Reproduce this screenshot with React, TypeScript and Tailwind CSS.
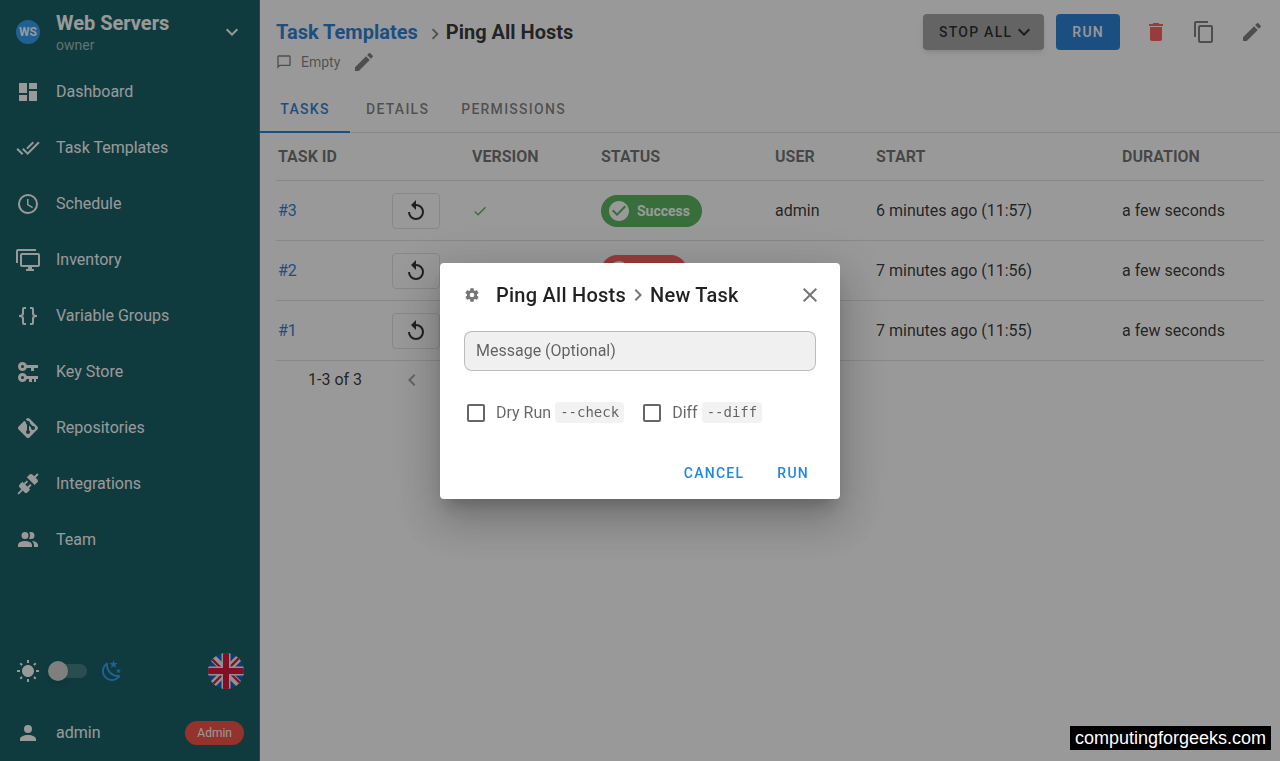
import { useState } from 'react'

const icons = {
  dashboard: 'M13,3V9H21V3M13,21H21V11H13M3,21H11V15H3M3,13H11V3H3V13Z',
  checkAll: 'M0.41,13.41L6,19L7.41,17.58L1.83,12M22.24,5.58L11.66,16.17L7.5,12L6.07,13.41L11.66,19L23.66,7M18,7L16.59,5.58L10.24,11.93L11.66,13.34L18,7Z',
  clock: 'M12,20A8,8 0 0,0 20,12A8,8 0 0,0 12,4A8,8 0 0,0 4,12A8,8 0 0,0 12,20M12,2A10,10 0 0,1 22,12A10,10 0 0,1 12,22C6.47,22 2,17.5 2,12A10,10 0 0,1 12,2M12.5,7V12.25L17,14.92L16.25,16.15L11,13V7H12.5Z',
  monitors: 'M22,17V7H6V17H22M22,5A2,2 0 0,1 24,7V17C24,18.11 23.1,19 22,19H16V21H18V23H10V21H12V19H6C4.89,19 4,18.11 4,17V7A2,2 0 0,1 6,5H22M2,3V15H0V3A2,2 0 0,1 2,1H20V3H2Z',
  braces: 'M8,3A2,2 0 0,0 6,5V9A2,2 0 0,1 4,11H3V13H4A2,2 0 0,1 6,15V19A2,2 0 0,0 8,21H10V19H8V14A2,2 0 0,0 6,12A2,2 0 0,0 8,10V5H10V3M16,3A2,2 0 0,1 18,5V9A2,2 0 0,0 20,11H21V13H20A2,2 0 0,0 18,15V19A2,2 0 0,1 16,21H14V19H16V14A2,2 0 0,1 18,12A2,2 0 0,1 16,10V5H14V3H16Z',
  keys: 'M6.5,2C8.46,2 10.13,3.25 10.74,5H22V8H18V11H15V8H10.74C10.13,9.75 8.46,11 6.5,11C4,11 2,9 2,6.5C2,4 4,2 6.5,2M6.5,5A1.5,1.5 0 0,0 5,6.5A1.5,1.5 0 0,0 6.5,8A1.5,1.5 0 0,0 8,6.5A1.5,1.5 0 0,0 6.5,5M6.5,13C8.46,13 10.13,14.25 10.74,16H22V19H20V22H18V19H16V22H13V19H10.74C10.13,20.75 8.46,22 6.5,22C4,22 2,20 2,17.5C2,15 4,13 6.5,13M6.5,16A1.5,1.5 0 0,0 5,17.5A1.5,1.5 0 0,0 6.5,19A1.5,1.5 0 0,0 8,17.5A1.5,1.5 0 0,0 6.5,16Z',
  git: 'M2.6,10.59L8.38,4.8L10.07,6.5C9.83,7.35 10.22,8.28 11,8.73V14.27C10.4,14.61 10,15.26 10,16A2,2 0 0,0 12,18A2,2 0 0,0 14,16C14,15.26 13.6,14.61 13,14.27V9.41L15.07,11.5C15,11.65 15,11.82 15,12A2,2 0 0,0 17,14A2,2 0 0,0 19,12A2,2 0 0,0 17,10C16.82,10 16.65,10 16.5,10.07L13.93,7.5C14.19,6.57 13.71,5.55 12.78,5.16C12.35,5 11.9,4.96 11.5,5.07L9.8,3.38L10.59,2.6C11.37,1.81 12.63,1.81 13.41,2.6L21.4,10.59C22.19,11.37 22.19,12.63 21.4,13.41L13.41,21.4C12.63,22.19 11.37,22.19 10.59,21.4L2.6,13.41C1.81,12.63 1.81,11.37 2.6,10.59Z',
  connection: 'M21.4 7.5C22.2 8.3 22.2 9.6 21.4 10.3L18.6 13.1L10.8 5.3L13.6 2.5C14.4 1.7 15.7 1.7 16.4 2.5L18.2 4.3L21.2 1.3L22.6 2.7L19.6 5.7L21.4 7.5M15.6 13.3L14.2 11.9L11.4 14.7L9.3 12.6L12.1 9.8L10.7 8.4L7.9 11.2L6.4 9.8L3.6 12.6C2.8 13.4 2.8 14.7 3.6 15.4L5.4 17.2L1.4 21.2L2.8 22.6L6.8 18.6L8.6 20.4C9.4 21.2 10.7 21.2 11.4 20.4L14.2 17.6L12.8 16.2L15.6 13.3Z',
  team: 'M16 17V19H2V17S2 13 9 13 16 17 16 17M12.5 7.5A3.5 3.5 0 1 0 9 11A3.5 3.5 0 0 0 12.5 7.5M15.94 13A5.32 5.32 0 0 1 18 17V19H22V17S22 13.37 15.94 13M15 4A3.39 3.39 0 0 0 13.07 4.59A5 5 0 0 1 13.07 10.41A3.39 3.39 0 0 0 15 11A3.5 3.5 0 0 0 15 4Z',
  account: 'M12,4A4,4 0 0,1 16,8A4,4 0 0,1 12,12A4,4 0 0,1 8,8A4,4 0 0,1 12,4M12,14C16.42,14 20,15.79 20,18V20H4V18C4,15.79 7.58,14 12,14Z',
  chevronDown: 'M7.41,8.58L12,13.17L16.59,8.58L18,10L12,16L6,10L7.41,8.58Z',
  chevronRight: 'M8.59,16.58L13.17,12L8.59,7.41L10,6L16,12L10,18L8.59,16.58Z',
  chevronLeft: 'M15.41,16.58L10.83,12L15.41,7.41L14,6L8,12L14,18L15.41,16.58Z',
  pencil: 'M20.71,7.04C21.1,6.65 21.1,6 20.71,5.63L18.37,3.29C18,2.9 17.35,2.9 16.96,3.29L15.12,5.12L18.87,8.87M3,17.25V21H6.75L17.81,9.93L14.06,6.18L3,17.25Z',
  trash: 'M19,4H15.5L14.5,3H9.5L8.5,4H5V6H19M6,19A2,2 0 0,0 8,21H16A2,2 0 0,0 18,19V7H6V19Z',
  copy: 'M19,21H8V7H19M19,5H8A2,2 0 0,0 6,7V21A2,2 0 0,0 8,23H19A2,2 0 0,0 21,21V7A2,2 0 0,0 19,5M16,1H4A2,2 0 0,0 2,3V17H4V3H16V1Z',
  replay: 'M12,5V1L7,6L12,11V7A6,6 0 0,1 18,13A6,6 0 0,1 12,19A6,6 0 0,1 6,13H4A8,8 0 0,0 12,21A8,8 0 0,0 20,13A8,8 0 0,0 12,5Z',
  check: 'M21,7L9,19L3.5,13.5L4.91,12.09L9,16.17L19.59,5.59L21,7Z',
  checkCircle: 'M12 2C6.5 2 2 6.5 2 12S6.5 22 12 22 22 17.5 22 12 17.5 2 12 2M10 17L5 12L6.41 10.59L10 14.17L17.59 6.58L19 8L10 17Z',
  alertCircle: 'M13,13H11V7H13M13,17H11V15H13M12,2A10,10 0 0,0 2,12A10,10 0 0,0 12,22A10,10 0 0,0 22,12A10,10 0 0,0 12,2Z',
  close: 'M19,6.41L17.59,5L12,10.59L6.41,5L5,6.41L10.59,12L5,17.59L6.41,19L12,13.41L17.59,19L19,17.59L13.41,12L19,6.41Z',
  message: 'M20 2H4C2.9 2 2 2.9 2 4V22L6 18H20C21.1 18 22 17.1 22 16V4C22 2.9 21.1 2 20 2M20 16H5.2L4 17.2V4H20V16Z',
  cog: 'M12,15.5A3.5,3.5 0 0,1 8.5,12A3.5,3.5 0 0,1 12,8.5A3.5,3.5 0 0,1 15.5,12A3.5,3.5 0 0,1 12,15.5M19.43,12.97C19.47,12.65 19.5,12.33 19.5,12C19.5,11.67 19.47,11.34 19.43,11L21.54,9.37C21.73,9.22 21.78,8.95 21.66,8.73L19.66,5.27C19.54,5.05 19.27,4.96 19.05,5.05L16.56,6.05C16.04,5.66 15.5,5.32 14.87,5.07L14.5,2.42C14.46,2.18 14.25,2 14,2H10C9.75,2 9.54,2.18 9.5,2.42L9.13,5.07C8.5,5.32 7.96,5.66 7.44,6.05L4.95,5.05C4.73,4.96 4.46,5.05 4.34,5.27L2.34,8.73C2.21,8.95 2.27,9.22 2.46,9.37L4.57,11C4.53,11.34 4.5,11.67 4.5,12C4.5,12.33 4.53,12.65 4.57,12.97L2.46,14.63C2.27,14.78 2.21,15.05 2.34,15.27L4.34,18.73C4.46,18.95 4.73,19.03 4.95,18.95L7.44,17.94C7.96,18.34 8.5,18.68 9.13,18.93L9.5,21.58C9.54,21.82 9.75,22 10,22H14C14.25,22 14.46,21.82 14.5,21.58L14.87,18.93C15.5,18.67 16.04,18.34 16.56,17.94L19.05,18.95C19.27,19.03 19.54,18.95 19.66,18.73L21.66,15.27C21.78,15.05 21.73,14.78 21.54,14.63L19.43,12.97Z',
  sun: 'M3.55 19.09L4.96 20.5L6.76 18.71L5.34 17.29M12 6C8.69 6 6 8.69 6 12S8.69 18 12 18 18 15.31 18 12C18 8.68 15.31 6 12 6M20 13H23V11H20M17.24 18.71L19.04 20.5L20.45 19.09L18.66 17.29M20.45 5L19.04 3.6L17.24 5.39L18.66 6.81M13 1H11V4H13M6.76 5.39L4.96 3.6L3.55 5L5.34 6.81L6.76 5.39M1 13H4V11H1M13 20H11V23H13',
  night: 'M17.75,4.09L15.22,6.03L16.13,9.09L13.5,7.28L10.87,9.09L11.78,6.03L9.25,4.09L12.44,4L13.5,1L14.56,4L17.75,4.09M21.25,11L19.61,12.25L20.2,14.23L18.5,13.06L16.8,14.23L17.39,12.25L15.75,11L17.81,10.95L18.5,9L19.19,10.95L21.25,11M18.97,15.95C19.8,15.87 20.69,17.05 20.16,17.8C19.84,18.25 19.5,18.67 19.08,19.07C15.17,23 8.84,23 4.94,19.07C1.03,15.17 1.03,8.83 4.94,4.93C5.34,4.53 5.76,4.17 6.21,3.85C6.96,3.32 8.14,4.21 8.06,5.04C7.79,7.9 8.75,10.87 10.95,13.06C13.14,15.26 16.1,16.22 18.97,15.95M17.33,17.97C14.5,17.81 11.7,16.64 9.53,14.5C7.36,12.31 6.2,9.5 6.04,6.68C3.23,9.82 3.34,14.64 6.35,17.66C9.37,20.67 14.19,20.78 17.33,17.97Z',
}

type IconName = keyof typeof icons

interface navItem {
  icon: IconName
  label: string
}

interface task {
  id: number
  status: 'Success' | 'Failed'
  user: string
  start: string
  duration: string
}

const navItems: navItem[] = [
  { icon: 'dashboard', label: 'Dashboard' },
  { icon: 'checkAll', label: 'Task Templates' },
  { icon: 'clock', label: 'Schedule' },
  { icon: 'monitors', label: 'Inventory' },
  { icon: 'braces', label: 'Variable Groups' },
  { icon: 'keys', label: 'Key Store' },
  { icon: 'git', label: 'Repositories' },
  { icon: 'connection', label: 'Integrations' },
  { icon: 'team', label: 'Team' },
]

const tasks: task[] = [
  { id: 3, status: 'Success', user: 'admin', start: '6 minutes ago (11:57)', duration: 'a few seconds' },
  { id: 2, status: 'Failed', user: 'admin', start: '7 minutes ago (11:56)', duration: 'a few seconds' },
  { id: 1, status: 'Failed', user: 'admin', start: '7 minutes ago (11:55)', duration: 'a few seconds' },
]

function Icon({ name, className = 'size-6' }: { name: IconName, className?: string }) {
  return (
    <svg viewBox="0 0 24 24" fill="currentColor" aria-hidden="true" className={`shrink-0 ${className}`}>
      <path d={icons[name]} />
    </svg>
  )
}

function Flag() {
  return (
    <svg viewBox="0 0 36 36" className="size-9" aria-hidden="true">
      <clipPath id="flag-round"><circle cx="18" cy="18" r="18" /></clipPath>
      <g clipPath="url(#flag-round)">
        <rect width="36" height="36" fill="#0052b4" />
        <path d="M0 0L36 36M36 0L0 36" stroke="#f0f0f0" strokeWidth="7" />
        <path d="M3 5L14 16M31 5L22 14M33 31L22 20M5 31L14 22" stroke="#d80027" strokeWidth="2.4" />
        <path d="M18 0V36M0 18H36" stroke="#f0f0f0" strokeWidth="9" />
        <path d="M18 0V36M0 18H36" stroke="#d80027" strokeWidth="6" />
      </g>
    </svg>
  )
}

function Sidebar() {
  return (
    <aside className="flex w-[260px] shrink-0 flex-col bg-[#005057] text-white shadow-[inset_-1px_0_0_#2c6a6c]">
      <button className="flex h-16 items-center px-4 text-left">
        <span className="flex size-6 items-center justify-center rounded-full bg-[#2196f3] text-xs font-bold">WS</span>
        <span className="ml-4 flex-1 pt-0.5">
          <span className="block text-xl leading-6 font-bold">Web Servers</span>
          <span className="block text-sm leading-5 text-white/60">owner</span>
        </span>
        <Icon name="chevronDown" />
      </button>
      <nav className="flex-1">
        {navItems.map((item) => (
          <a key={item.label} href="#" className="flex h-14 items-center gap-4 px-4">
            <Icon name={item.icon} />
            {item.label}
          </a>
        ))}
      </nav>
      <div className="flex h-14 items-center px-4">
        <Icon name="sun" />
        <label className="mr-3 ml-2 flex h-5 w-10 items-center">
          <input type="checkbox" role="switch" aria-label="Dark mode" className="peer sr-only" />
          <span className="ml-1 flex h-[14px] w-[35px] items-center rounded-full bg-white/20">
            <span className="-ml-1 size-5 shrink-0 rounded-full bg-[#d0d0d0] shadow-md" />
          </span>
        </label>
        <Icon name="night" className="size-6 text-[#2196f3]" />
        <button aria-label="Language" className="ml-auto"><Flag /></button>
      </div>
      <a href="#" className="mt-1.5 flex h-14 items-center gap-4 px-4">
        <Icon name="account" />
        <span className="flex-1">admin</span>
        <span className="flex h-6 items-center rounded-full bg-[#f44336] px-3 text-xs">Admin</span>
      </a>
    </aside>
  )
}

function Toolbar() {
  return (
    <header className="flex h-16 items-center pr-1 pl-4">
      <h1 className="flex flex-1 items-center text-xl font-bold">
        <a href="#" className="text-[#1976d2]">Task Templates</a>
        <Icon name="chevronRight" className="mt-1 ml-1.5 size-[22px] text-black/55" />
        <span className="text-black/87">Ping All Hosts</span>
      </h1>
      <button className="flex h-9 items-center rounded bg-[#9e9e9e] pr-2 pl-4 text-sm font-medium tracking-[0.09em] text-black/87 shadow-md">
        STOP ALL
        <Icon name="chevronDown" />
      </button>
      <button className="mx-3 h-9 rounded bg-[#1976d2] px-4 text-sm font-medium tracking-[0.09em] text-white">RUN</button>
      <button aria-label="Delete" className="flex size-12 items-center justify-center text-[#ff5252]"><Icon name="trash" /></button>
      <button aria-label="Copy" className="flex size-12 items-center justify-center text-black/54"><Icon name="copy" /></button>
      <button aria-label="Edit" className="flex size-12 items-center justify-center text-black/54"><Icon name="pencil" /></button>
    </header>
  )
}

function StatusChip({ status }: { status: task['status'] }) {
  const ok = status === 'Success'
  return (
    <span className={`inline-flex h-8 items-center gap-1.5 rounded-full pr-3 pl-1.5 align-middle text-sm font-bold text-white ${ok ? 'bg-[#4caf50]' : 'bg-[#ff5252]'}`}>
      <Icon name={ok ? 'checkCircle' : 'alertCircle'} />
      {status}
    </span>
  )
}

function TaskTable() {
  return (
    <table className="w-full table-fixed border-separate border-spacing-0 text-left [&_td]:border-b [&_td]:border-black/12 [&_th]:border-b [&_th]:border-black/12">
      <colgroup>
        <col className="w-[100px]" />
        <col className="w-[80px]" />
        <col className="w-[129px]" />
        <col className="w-[174px]" />
        <col className="w-[101px]" />
        <col className="w-[246px]" />
        <col className="w-[158px]" />
      </colgroup>
      <thead className="text-black/60">
        <tr className="h-12">
          <th className="pl-0.5">TASK ID</th>
          <th aria-label="Actions" />
          <th className="pl-4">VERSION</th>
          <th className="pl-4">STATUS</th>
          <th className="pl-4">USER</th>
          <th className="pl-4">START</th>
          <th className="pl-4">DURATION</th>
        </tr>
      </thead>
      <tbody className="text-black/87">
        {tasks.map((task) => (
          <tr key={task.id} className="h-15">
            <td className="pl-0.5"><a href="#" className="text-[#1976d2]">#{task.id}</a></td>
            <td className="pl-4">
              <button aria-label={`Rerun task ${task.id}`} className="flex h-9 w-12 items-center justify-center rounded border border-black/12">
                <Icon name="replay" />
              </button>
            </td>
            <td className="pl-4"><Icon name={task.status === 'Success' ? 'check' : 'close'} className={task.status === 'Success' ? 'size-4 text-[#4caf50]' : 'size-4 text-[#ff5252]'} /></td>
            <td className="pl-4"><StatusChip status={task.status} /></td>
            <td className="pl-4">{task.user}</td>
            <td className="pl-4">{task.start}</td>
            <td className="pl-4">{task.duration}</td>
          </tr>
        ))}
      </tbody>
    </table>
  )
}

function OptionBox({ label, flag }: { label: string, flag: string }) {
  return (
    <label className="flex items-center text-black/60">
      <input type="checkbox" className="mx-[3px] size-[18px] appearance-none rounded-xs border-2 border-black/60 checked:bg-[#1976d2]" />
      <span className="ml-2">{label}</span>
      <code className="ml-1 rounded bg-black/5 px-[5px] font-['DejaVu_Sans_Mono',monospace] text-sm leading-[21px]">{flag}</code>
    </label>
  )
}

function NewTaskDialog() {
  const [message, setMessage] = useState('')
  return (
    <div className="fixed inset-0 flex items-center justify-center bg-[#212121]/46">
      <div role="dialog" aria-labelledby="dialog-title" className="w-[400px] rounded bg-white shadow-[0_11px_15px_-7px_rgba(0,0,0,0.2),0_24px_38px_3px_rgba(0,0,0,0.14),0_9px_46px_8px_rgba(0,0,0,0.12)]">
        <div className="flex h-16 items-center pr-3 pl-6">
          <Icon name="cog" className="size-4 text-black/54" />
          <h2 id="dialog-title" className="ml-4 flex flex-1 items-center text-xl font-medium tracking-[0.0125em] text-black/87">
            Ping All Hosts
            <Icon name="chevronRight" className="size-6 text-black/54" />
            New Task
          </h2>
          <button aria-label="Close" className="flex size-9 items-center justify-center text-black/54"><Icon name="close" /></button>
        </div>
        <div className="px-6 pt-1">
          <input
            aria-label="Message (Optional)"
            placeholder="Message (Optional)"
            value={message}
            onChange={(e) => setMessage(e.target.value)}
            className="block h-10 w-full rounded-lg border border-black/22 bg-[#f0f0f0] px-[11px] placeholder:text-black/60"
          />
          <div className="mt-[30px] flex h-6 items-center gap-4">
            <OptionBox label="Dry Run" flag="--check" />
            <OptionBox label="Diff" flag="--diff" />
          </div>
        </div>
        <div className="mt-[22px] flex h-[52px] items-start justify-end gap-px pt-2 pr-[15px] text-sm font-medium text-[#1e88e5]">
          <button className="h-9 px-4 tracking-[0.09em]">CANCEL</button>
          <button className="h-9 px-4 tracking-[0.09em]">RUN</button>
        </div>
      </div>
    </div>
  )
}

export default function App() {
  return (
    <div className="flex min-h-screen bg-white font-[Roboto,sans-serif] text-base">
      <Sidebar />
      <main className="min-w-0 flex-1">
        <Toolbar />
        <div className="-mt-3.5 flex h-6 items-center pl-4 text-sm text-black/54">
          <Icon name="message" className="size-4" />
          <span className="ml-[9px]">Empty</span>
          <button aria-label="Edit description" className="ml-3"><Icon name="pencil" className="size-6" /></button>
        </div>
        <nav className="mt-[11px] flex h-12 border-b border-black/12 text-sm font-medium tracking-[0.09em] text-black/54">
          <button className="-mb-px min-w-[90px] border-b-2 border-[#1976d2] px-4 pt-0.5 text-[#1976d2]">TASKS</button>
          <button className="px-4">DETAILS</button>
          <button className="px-4">PERMISSIONS</button>
        </nav>
        <div className="px-4">
          <TaskTable />
          <div className="mt-px flex h-9 items-center pl-8 text-black/87">
            <span>1-3 of 3</span>
            <button aria-label="Previous page" disabled className="ml-[38px] text-black/38"><Icon name="chevronLeft" /></button>
            <button aria-label="Next page" disabled className="ml-3 text-black/38"><Icon name="chevronRight" /></button>
          </div>
        </div>
      </main>
      <NewTaskDialog />
      <div className="fixed right-[9px] bottom-[11px] bg-black px-[5px] font-['Liberation_Sans',sans-serif] text-lg leading-6 text-white">computingforgeeks.com</div>
    </div>
  )
}
